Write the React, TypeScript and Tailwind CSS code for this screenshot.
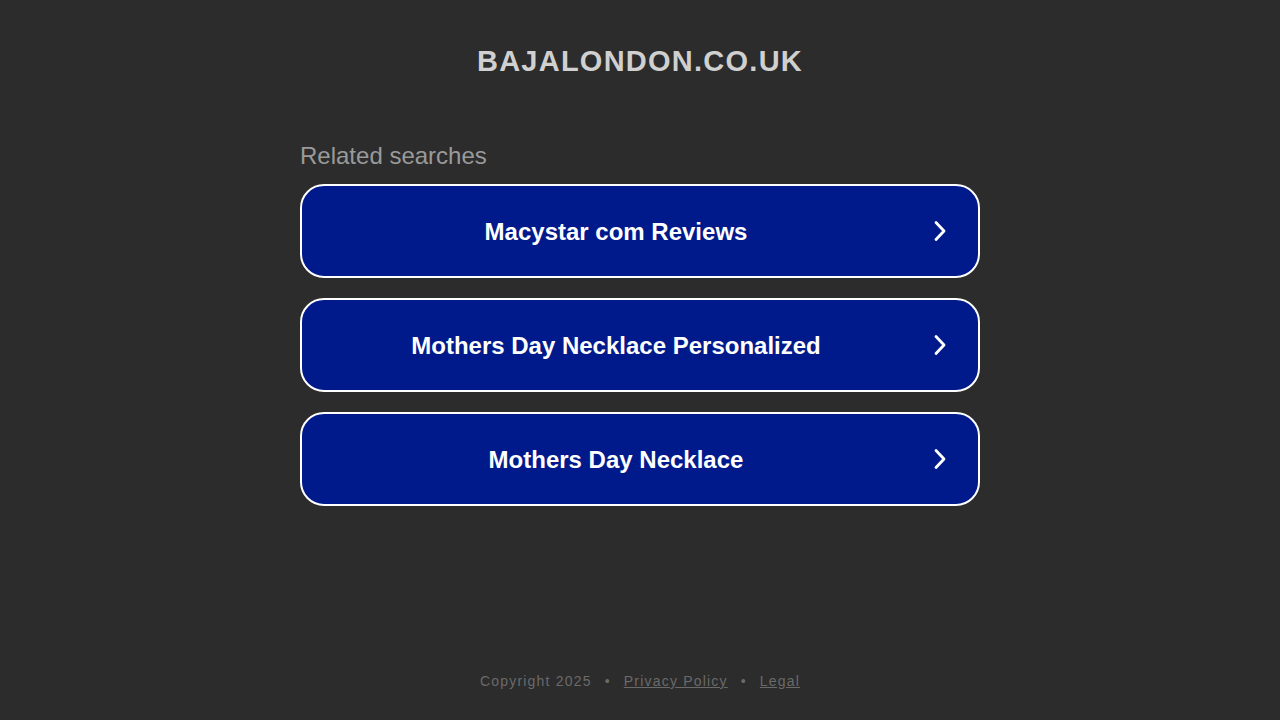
import React from "react";

const items = ["Macystar com Reviews", "Mothers Day Necklace Personalized", "Mothers Day Necklace"];

function Chevron() {
  return (
    <svg width="16" height="24" viewBox="0 0 16 24" fill="none" stroke="white" strokeWidth="2.8" strokeLinecap="round" strokeLinejoin="round">
      <path d="M4 3.5 L12 12 L4 20.5" />
    </svg>
  );
}

export default function App() {
  return (
    <div className="min-h-[720px] w-full bg-[#2c2c2c] flex flex-col items-center" style={{ fontFamily: '"Liberation Sans", Arial, sans-serif' }}>
      <h1 className="mt-[42px] text-[29px] leading-[38px] font-bold tracking-[1.25px] text-[#d0d0d0]">BAJALONDON.CO.UK</h1>
      <div className="mt-[62px] w-[680px] flex flex-col">
        <div className="text-[24px] leading-[28px] text-[#9a9a9a]">Related searches</div>
        <div className="mt-[14px] flex flex-col gap-[20px]">
          {items.map((t) => (
            <div key={t} className="h-[94px] rounded-[24px] border-2 border-white bg-[#011a8b] flex items-center pl-0 pr-[30px]">
              <span className="flex-1 mr-[2px] pt-[2px] text-center text-[24px] leading-[30px] font-bold text-white">{t}</span>
              <Chevron />
            </div>
          ))}
        </div>
      </div>
      <div className="flex-1" />
      <div className="mb-[29px] text-[14px] leading-[20px] tracking-[1.2px] text-[#6a6a6a] flex gap-[13px]">
        <span>Copyright 2025</span>
        <span>•</span>
        <span className="underline">Privacy Policy</span>
        <span>•</span>
        <span className="underline">Legal</span>
      </div>
    </div>
  );
}
